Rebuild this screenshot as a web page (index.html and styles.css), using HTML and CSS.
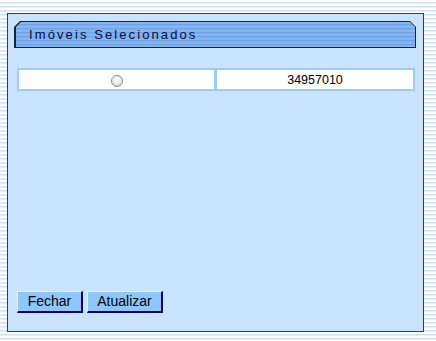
FILE: index.html
```html
<!DOCTYPE html>
<html lang="pt-BR">
<head>
    <meta charset="UTF-8">
    <title>Imóveis Selecionados</title>
    <link rel="stylesheet" href="styles.css">
</head>
<body>
    <div class="janela">
        <div class="titulo">
            <div class="titulo-fundo">Imóveis Selecionados</div>
        </div>
        <div class="tabela">
            <div class="celula"><input type="radio" name="imovel" class="radio"></div>
            <div class="celula">34957010</div>
        </div>
        <div class="botoes">
            <button type="button" class="botao">Fechar</button>
            <button type="button" class="botao">Atualizar</button>
        </div>
    </div>
</body>
</html>
```

FILE: styles.css
```css
body {
    margin: 0;
    padding: 13px 0 0 7px;
    font-family: "Liberation Sans", Arial, sans-serif;
    background: repeating-linear-gradient(to bottom, #ffffff 0, #ffffff 2px, #cfe2f4 2px, #cfe2f4 3px, #e3effa 3px, #e3effa 4px);
    height: 341px;
    box-sizing: border-box;
}
.janela {
    border: 1px solid #2e3e58;
    background-color: #cae3fd;
    display: flex;
    flex-direction: column;
    padding: 7px 7px 0 6px;
    width: 402px;
    height: 310px;
}
.titulo {
    height: 27px;
    background-color: #14243a;
    padding: 1px 1px 1px 2px;
    box-sizing: border-box;
    clip-path: polygon(6px 0, calc(100% - 6px) 0, 100% 6px, 100% 100%, 0 100%, 0 6px);
}
.titulo-fundo {
    height: 100%;
    background: repeating-linear-gradient(to bottom, #86b6f0 0, #86b6f0 2px, #6fa3e4 2px, #6fa3e4 3px, #7dafec 3px, #7dafec 4px);
    clip-path: polygon(5px 0, calc(100% - 5px) 0, 100% 5px, 100% 100%, 0 100%, 0 5px);
    color: #0a0a3a;
    font-size: 13px;
    letter-spacing: 2.1px;
    line-height: 25px;
    padding-left: 13px;
}
.tabela {
    margin: 20px 0 0 3px;
    width: 398px;
    height: 23px;
    box-sizing: border-box;
    background-color: #99ccff;
    padding: 2px;
    display: grid;
    grid-template-columns: 195px 1fr;
    gap: 3px;
}
.celula {
    background-color: #ffffff;
    display: flex;
    align-items: center;
    justify-content: center;
    font-size: 12.5px;
    color: #000000;
}
.radio {
    appearance: none;
    margin: 2px 0 0 0;
    width: 12px;
    height: 12px;
    border: 1px solid #8c8c8c;
    border-radius: 50%;
    background: radial-gradient(circle at 50% 40%, #ffffff 0, #f2f2f2 35%, #c8c8c8 100%);
    box-sizing: border-box;
}
.botoes {
    margin: 200px 0 0 3px;
    display: flex;
    gap: 4px;
}
.botao {
    height: 22px;
    padding: 0 0 1px 0;
    font-family: "Liberation Sans", Arial, sans-serif;
    font-size: 14px;
    color: #000000;
    background-color: #8ec7ff;
    border-style: solid;
    border-width: 1px 2px 2px 1px;
    border-color: #e6f2ff #000066 #000066 #e6f2ff;
}
.botao:first-child {
    width: 66px;
}
.botao:last-child {
    width: 76px;
}
```
